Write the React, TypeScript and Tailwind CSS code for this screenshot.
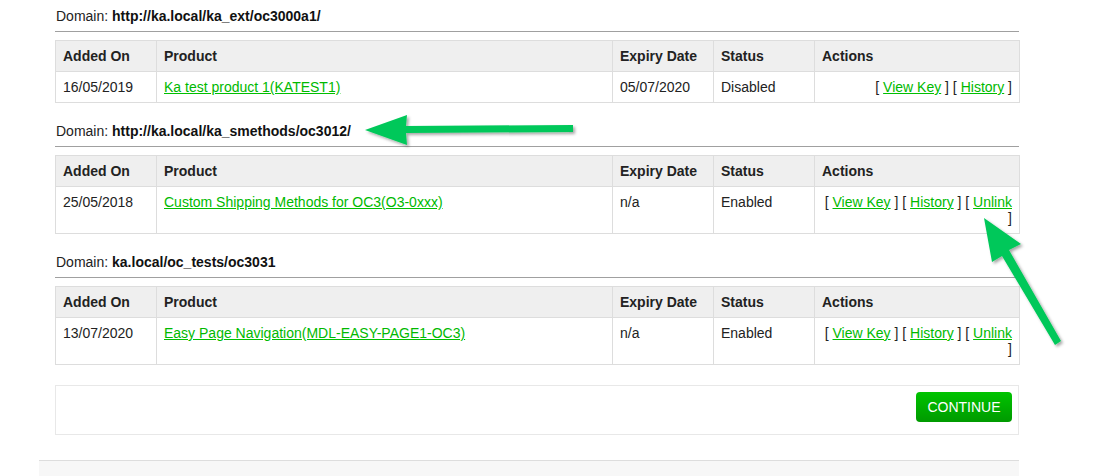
type Row = {
  added: string
  product: string
  expiry: string
  status: string
  unlink?: boolean
}

type Domain = {
  url: string
  rows: Row[]
}

const domains: Domain[] = [
  {
    url: "http://ka.local/ka_ext/oc3000a1/",
    rows: [{ added: "16/05/2019", product: "Ka test product 1(KATEST1)", expiry: "05/07/2020", status: "Disabled" }],
  },
  {
    url: "http://ka.local/ka_smethods/oc3012/",
    rows: [
      { added: "25/05/2018", product: "Custom Shipping Methods for OC3(O3-0xxx)", expiry: "n/a", status: "Enabled", unlink: true },
    ],
  },
  {
    url: "ka.local/oc_tests/oc3031",
    rows: [
      { added: "13/07/2020", product: "Easy Page Navigation(MDL-EASY-PAGE1-OC3)", expiry: "n/a", status: "Enabled", unlink: true },
    ],
  },
]

const th = "border border-[#dddddd] bg-[#efefef] px-[7px] py-[7px] text-left font-bold text-[#222222]"
const td = "border border-[#dddddd] px-[7px] py-[7px] align-top text-[#222222]"
const link = "text-[#00b900] underline decoration-[#00c000]"

function KeyTable({ rows }: { rows: Row[] }) {
  return (
    <table className="w-full border-collapse table-fixed">
      <colgroup>
        <col className="w-[101px]" />
        <col className="w-[456px]" />
        <col className="w-[101px]" />
        <col className="w-[101px]" />
        <col className="w-[205px]" />
      </colgroup>
      <thead>
        <tr>
          <th className={th}>Added On</th>
          <th className={th}>Product</th>
          <th className={th}>Expiry Date</th>
          <th className={th}>Status</th>
          <th className={th}>Actions</th>
        </tr>
      </thead>
      <tbody>
        {rows.map((r) => (
          <tr key={r.product}>
            <td className={td}>{r.added}</td>
            <td className={td}>
              <a href="#" className={link}>{r.product}</a>
            </td>
            <td className={td}>{r.expiry}</td>
            <td className={td}>{r.status}</td>
            <td className={td + " text-right"}>
              [ <a href="#" className={link}>View Key</a> ] [ <a href="#" className={link}>History</a> ]
              {r.unlink && (
                <>
                  {" "}[ <a href="#" className={link}>Unlink</a> ]
                </>
              )}
            </td>
          </tr>
        ))}
      </tbody>
    </table>
  )
}

export default function App() {
  return (
    <div className="relative h-[476px] w-[1109px] overflow-hidden bg-white font-['Liberation_Sans',Arial,sans-serif] text-[14px] leading-[16px] text-[#222222]">
      <div className="ml-[55px] w-[964px] pt-[8px]">
        {domains.map((d) => (
          <div key={d.url} className="mb-[20px]">
            <div className="border-b border-[#a0a0a0] pb-[7px] pl-[1px]">
              Domain: <b className="text-[#111111]">{d.url}</b>
            </div>
            <div className="mt-[8px]">
              <KeyTable rows={d.rows} />
            </div>
          </div>
        ))}
        <div className="flex justify-end border border-[#e8e8e8] px-[6px] pb-[12px] pt-[6px]">
          <button className="h-[30px] w-[96px] rounded-[4px] bg-gradient-to-b from-[#00c400] to-[#009a00] text-[14px] text-white">
            CONTINUE
          </button>
        </div>
      </div>
      <div className="ml-[39px] mt-[25px] h-[40px] w-[980px] border-t border-[#dddddd] bg-[#f7f7f7]" />

      <svg className="pointer-events-none absolute left-0 top-0" width="1109" height="476" viewBox="0 0 1109 476">
        <defs>
          <filter id="sh" x="-20%" y="-20%" width="140%" height="140%">
            <feDropShadow dx="2" dy="2" stdDeviation="1.5" floodColor="#000" floodOpacity="0.35" />
          </filter>
        </defs>
        <g fill="#00c85a" filter="url(#sh)">
          <polygon points="365,130 407,115 406,126 573,125 573,132 406,133 407,145" />
          <polygon points="984,218 1021,244 1009,250 1061,341 1055,345 1002,256 992,262" />
        </g>
      </svg>
    </div>
  )
}
